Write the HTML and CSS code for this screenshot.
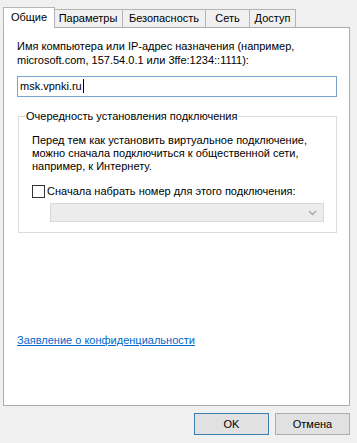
FILE: index.html
```html
<!DOCTYPE html>
<html lang="ru">
<head>
  <meta charset="UTF-8">
  <title>Свойства подключения</title>
  <link rel="stylesheet" href="styles.css">
</head>
<body>

  <div class="tabs">
    <div class="tab active">Общие</div>
    <div class="tab">Параметры</div>
    <div class="tab">Безопасность</div>
    <div class="tab">Сеть</div>
    <div class="tab">Доступ</div>
  </div>

  <div class="panel">
    <label class="host-label" for="host">Имя компьютера или IP-адрес назначения (например,<br>microsoft.com, 157.54.0.1 или 3ffe:1234::1111):</label>
    <div class="host-input" id="host">msk.vpnki.ru<span class="caret"></span></div>

    <fieldset class="group">
      <legend>Очередность установления подключения</legend>
      <p class="note">Перед тем как установить виртуальное подключение,<br>можно сначала подключиться к общественной сети,<br>например, к Интернету.</p>
      <div class="check-row">
        <span class="checkbox"></span>
        <span>Сначала набрать номер для этого подключения:</span>
      </div>
      <div class="combo">
        <svg width="9" height="6" viewBox="0 0 9 6"><path d="M1 1 L4.5 4.5 L8 1" fill="none" stroke="#a8a8a8" stroke-width="1.4"/></svg>
      </div>
    </fieldset>

    <a class="privacy" href="#">Заявление о конфиденциальности</a>
  </div>

  <div class="buttons">
    <button class="btn default">OK</button>
    <button class="btn">Отмена</button>
  </div>

</body>
</html>
```

FILE: styles.css
```css
body {
  margin: 0;
  background: #f0f0f0;
  font-family: "Liberation Sans", Arial, sans-serif;
  font-size: 11px;
  color: #000;
  width: 357px;
  height: 443px;
  overflow: hidden;
}
.tabs {
  display: flex;
  align-items: flex-end;
  height: 28px;
  padding-left: 3px;
  position: relative;
  z-index: 1;
}
.tab {
  height: 18px;
  line-height: 17px;
  box-sizing: border-box;
  text-align: center;
  border: 1px solid #b4b4b4;
  border-bottom: none;
  background: #f0f0f0;
  margin-left: -1px;
  margin-bottom: 1px;
}
.tab:first-child { margin-left: 0; }
.tab.active {
  background: #fff;
  height: 21px;
  line-height: 19px;
  margin-bottom: 0;
  margin-right: -1px;
  position: relative;
  z-index: 2;
}
.tab:nth-child(1) { width: 52px; }
.tab:nth-child(2) { width: 70px; }
.tab:nth-child(3) { width: 84px; }
.tab:nth-child(4) { width: 45px; }
.tab:nth-child(5) { width: 47px; }
.panel {
  margin: -1px 7px 0 3px;
  border: 1px solid #acacac;
  background: #fff;
  padding: 11px 12px 0 13px;
  box-sizing: border-box;
  height: 379px;
}
.host-label {
  display: block;
  line-height: 14px;
}
.host-input {
  margin-top: 9px;
  height: 21px;
  box-sizing: border-box;
  border: 1px solid #7aa3cf;
  padding: 0 2px;
  line-height: 19px;
  width: 320px;
}
.caret {
  display: inline-block;
  width: 1px;
  height: 14px;
  background: #000;
  vertical-align: -3px;
  margin-left: 1px;
}
.group {
  margin: 12px 0 0 1px;
  width: 319px;
  height: 124px;
  box-sizing: border-box;
  border: 1px solid #dcdcdc;
  padding: 0 0 0 6px;
}
.group legend {
  padding: 0 1px;
  line-height: 14px;
}
.note {
  margin: 11px 0 0 7px;
  line-height: 13px;
}
.check-row {
  display: flex;
  align-items: center;
  gap: 2px;
  margin: 11px 0 0 7px;
  line-height: 14px;
}
.checkbox {
  width: 11px;
  height: 11px;
  border: 1px solid #333;
  background: #fff;
}
.combo {
  margin: 5px 0 0 25px;
  width: 274px;
  height: 19px;
  box-sizing: border-box;
  border: 1px solid #d9d9d9;
  background: #ececec;
  display: flex;
  align-items: center;
  justify-content: flex-end;
  padding-right: 6px;
}
.privacy {
  display: inline-block;
  margin-top: 100px;
  color: #0066cc;
  line-height: 14px;
}
.buttons {
  display: flex;
  justify-content: flex-end;
  gap: 6px;
  padding: 7px 7px 0 0;
}
.btn {
  width: 75px;
  height: 22px;
  font-family: inherit;
  font-size: 11px;
  background: #e1e1e1;
  border: 1px solid #adadad;
  padding: 0;
  color: #000;
}
.btn.default { border-color: #3c7fb1; }
```
